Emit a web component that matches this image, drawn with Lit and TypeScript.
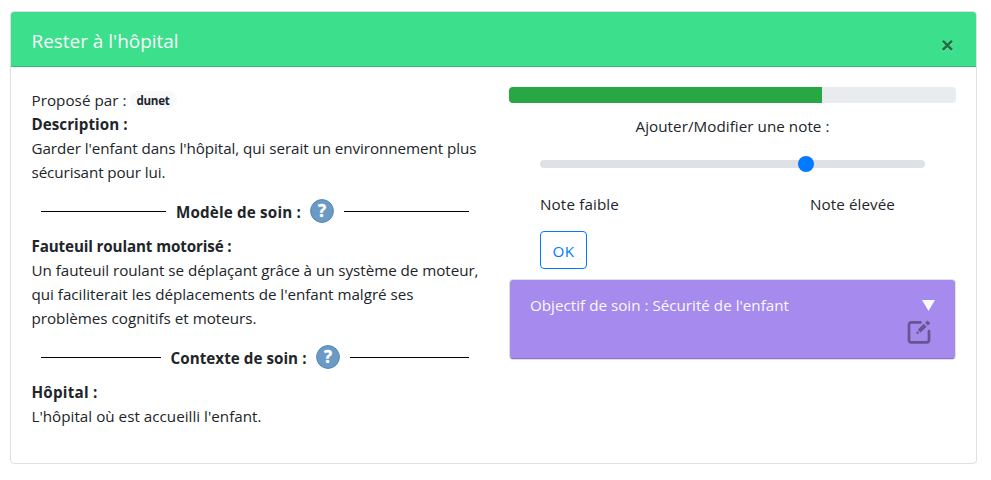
import { LitElement, html, css, svg } from "lit";
import { customElement, property } from "lit/decorators.js";

/** A single line of text tracked to a given width in pixels. */
@customElement("fit-line")
class FitLine extends LitElement {
  @property({ type: Number }) w = 0;
  @property() text = "";
  static styles = css`
    :host { display: inline-block; white-space: pre; }
    .line { display: inline-block; white-space: pre; }
  `;
  render() {
    return html`<span class="line">${this.text}</span>`;
  }
  updated() {
    const el = this.renderRoot.querySelector(".line") as HTMLElement;
    el.style.letterSpacing = "0px";
    const natural = el.getBoundingClientRect().width;
    el.style.letterSpacing = `${(this.w - natural) / this.text.length}px`;
  }
}

const line = (text: string, w: number) => html`<fit-line .text=${text} .w=${w}></fit-line>`;

@customElement("section-title")
class SectionTitle extends LitElement {
  @property() text = "";
  @property({ type: Number }) w = 0;
  static styles = css`
    :host { display: flex; align-items: center; padding: 0 10px; font-weight: 700; }
    .rule { flex: 1; height: 1px; background: #000; }
    .label { margin: 1px 9px 0 10px; line-height: 24px; }
    svg { width: 24px; height: 24px; margin-right: 10px; display: block; }
    .disc { fill: #6b9ac4; stroke: #4f87b9; }
    .mark { fill: #fff; stroke: #fff; stroke-width: 0.4; font: 700 17px "Open Sans", "Noto Sans", sans-serif; }
  `;
  render() {
    return html`
      <div class="rule"></div>
      <div class="label">${line(this.text, this.w)}</div>
      <svg viewBox="0 0 24 24">
        <circle class="disc" cx="12" cy="12" r="11.4"></circle>
        <text class="mark" x="12" y="18.4" text-anchor="middle">?</text>
      </svg>
      <div class="rule"></div>
    `;
  }
}

@customElement("app-root")
class AppRoot extends LitElement {
  @property({ type: Number }) score = 70;

  static styles = css`
    :host {
      display: block; box-sizing: border-box; height: 480px; padding: 11px 14px 16px 10px;
      background: #fff; color: #212529;
      font: 15.2px/24px "Open Sans", "Noto Sans", sans-serif;
    }
    * { box-sizing: border-box; }
    .card { height: 453px; border: 1px solid #dfdfdf; border-radius: 4px; overflow: hidden; }
    .head {
      height: 55px; padding: 3px 20px 0 20.5px; display: flex; align-items: center; justify-content: space-between;
      background: #3cdf8c; border-bottom: 1px solid #30bc75; color: #f8f9fa; font-size: 19px;
    }
    .close { width: 13px; height: 13px; margin: 9px 2px 0 0; }
    .close .shade { stroke: #9ff0c6; stroke-width: 2.4; }
    .close .cross { stroke: #1e7047; stroke-width: 2.6; }
    .body { display: flex; gap: 30px; padding: 20px; }
    .info { width: 448px; padding-top: 1px; }
    .row { height: 24px; padding-left: 0.5px; display: flex; align-items: center; }
    .strong { font-weight: 700; }
    .badge {
      margin-left: 3px; height: 18px; padding: 0 7px; border-radius: 9px; background: #f8f9fa;
      font-size: 11.6px; line-height: 19px; font-weight: 700;
    }
    .first { height: 50px; padding-top: 4px; }
    .second { height: 50px; padding-top: 4px; }
    .side { width: 447px; }
    .progress { height: 16px; border-radius: 4px; background: #e9ecef; overflow: hidden; }
    .bar { height: 100%; background: #28a745; }
    .rate { padding: 11px 31px 0; }
    .caption { text-align: center; }
    .slider { height: 24px; margin-top: 14px; display: flex; align-items: center; }
    .track { flex: 1; height: 8px; border-radius: 4px; background: #dee2e6; display: flex; align-items: center; }
    .before { flex: none; }
    .thumb { width: 16px; height: 16px; border-radius: 50%; background: #007bff; }
    .bounds { display: flex; justify-content: space-between; margin-top: 16px; padding-right: 30px; }
    .ok {
      display: block; margin: 15px 0 10px; width: 47px; height: 38px; padding: 2px 0 0; border: 1px solid #007bff;
      border-radius: 4px; background: #fff; color: #007bff; font: inherit; text-align: center;
    }
    .goal { height: 81px; border: 1px solid #dfdfdf; border-radius: 4px; overflow: hidden; }
    .goal-head {
      height: 79px; padding: 13px 20px 0; background: #a68aed; border-bottom: 1px solid #8b73c8; color: #f8f9fa;
      display: flex; justify-content: space-between;
    }
    .tools { display: flex; flex-direction: column; align-items: flex-end; padding-top: 7px; }
    .arrow { width: 13px; height: 11px; display: block; fill: #f8f9fa; }
    .edit { width: 24px; height: 24px; display: block; margin: 9px 4px 0 0; }
  `;

  render() {
    const cross = svg`<path d="M1.8 1.8 11 11M11 1.8 1.8 11"/>`;
    return html`
      <div class="card">
        <div class="head">
          ${line("Rester à l'hôpital", 147)}
          <svg class="close" viewBox="0 0 13 13" fill="none">
            <g class="shade" transform="translate(0 1)">${cross}</g>
            <g class="cross">${cross}</g>
          </svg>
        </div>
        <div class="body">
          <div class="info">
            <div class="row">
              ${line("Proposé par :", 95)}
              <span class="badge">${line("dunet", 33)}</span>
            </div>
            <div class="row strong">${line("Description :", 96)}</div>
            <div class="row">${line("Garder l'enfant dans l'hôpital, qui serait un environnement plus", 445)}</div>
            <div class="row">${line("sécurisant pour lui.", 134)}</div>
            <section-title class="first" text="Modèle de soin :" .w=${125}></section-title>
            <div class="row strong">${line("Fauteuil roulant motorisé :", 200)}</div>
            <div class="row">${line("Un fauteuil roulant se déplaçant grâce à un système de moteur,", 447)}</div>
            <div class="row">${line("qui faciliterait les déplacements de l'enfant malgré ses", 382)}</div>
            <div class="row">${line("problèmes cognitifs et moteurs.", 225)}</div>
            <section-title class="second" text="Contexte de soin :" .w=${136}></section-title>
            <div class="row strong">${line("Hôpital :", 66)}</div>
            <div class="row">${line("L'hôpital où est accueilli l'enfant.", 230)}</div>
          </div>
          <div class="side">
            <div class="progress"><div class="bar" style="width:${this.score}%"></div></div>
            <div class="rate">
              <div class="caption">${line("Ajouter/Modifier une note :", 194)}</div>
              <div class="slider">
                <div class="track">
                  <div class="before" style="width:calc((100% - 16px) * ${this.score} / 100)"></div>
                  <div class="thumb"></div>
                </div>
              </div>
              <div class="bounds">${line("Note faible", 79)}${line("Note élevée", 85)}</div>
              <button class="ok">${line("OK", 22)}</button>
            </div>
            <div class="goal">
              <div class="goal-head">
                ${line("Objectif de soin : Sécurité de l'enfant", 259)}
                <div class="tools">
                  <svg class="arrow" viewBox="0 0 13 11"><path d="M0 0h13L6.5 11z"></path></svg>
                  <svg class="edit" viewBox="0 0 24 24" fill="none" stroke="#67558f">
                    <path d="M13.500 2.300H4.300a2.300 2.300 0 0 0-2.300 2.300v15.400a2.300 2.300 0 0 0 2.300 2.300h15.400a2.300 2.300 0 0 0 2.300-2.300V11" stroke-width="2.700" stroke-linecap="round"></path>
                    <path d="M12.200 11 18.200 5.300M19.500 4.100 21.900 1.900" stroke-width="4"></path>
                    <path d="M10.200 10.700 12.500 13.200 9.200 14.100z" fill="#67558f" stroke="none"></path>
                  </svg>
                </div>
              </div>
            </div>
          </div>
        </div>
      </div>
    `;
  }
}
